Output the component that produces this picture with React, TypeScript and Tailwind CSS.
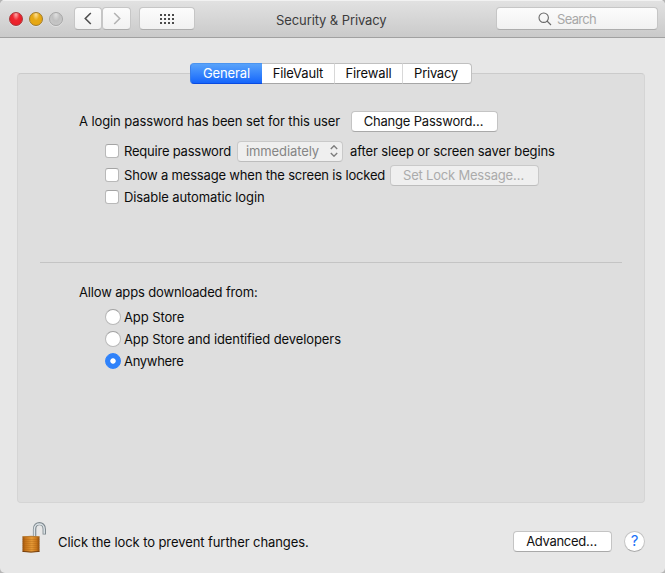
import { useState } from "react";
import type { ReactNode } from "react";
import clsx from "clsx";

const TABS = [
  { label: "General", className: "w-[72px] tracking-[-0.1px]" },
  { label: "FileVault", className: "w-[73px] tracking-[-0.15px]" },
  { label: "Firewall", className: "w-[68px] tracking-[-0.15px]" },
  { label: "Privacy", className: "w-[69px] pr-[2px] tracking-[-0.25px]" },
];

const SOURCES = [
  { name: "App Store", className: "tracking-[-0.1px]" },
  { name: "App Store and identified developers", className: "tracking-[-0.1px]" },
  { name: "Anywhere", className: "tracking-[-0.3px]" },
];

const TrafficLight = ({ className }: { className: string }) => (
  <span
    className={clsx(
      "size-[14px] rounded-full border shadow-[0_1px_0_rgba(255,255,255,0.35)]",
      className
    )}
  />
);

const ToolbarButton = ({
  className,
  label,
  children,
}: {
  className: string;
  label: string;
  children: ReactNode;
}) => (
  <button
    aria-label={label}
    className={clsx(
      "flex h-[23px] items-center justify-center rounded-[4px] border border-[#c6c6c6] border-b-[#adadad] bg-linear-to-b from-[#fcfcfc] to-[#f1f1f1]",
      className
    )}
  >
    {children}
  </button>
);

const PushButton = ({
  className,
  disabled,
  children,
}: {
  className: string;
  disabled?: boolean;
  children: ReactNode;
}) => (
  <button
    disabled={disabled}
    className={clsx(
      "flex h-[21px] items-center justify-center rounded-[4px] border whitespace-nowrap",
      disabled
        ? "border-[#c9c9c9] border-b-[#bdbdbd] bg-[#efefef] text-[#ababab]"
        : "border-[#c4c4c4] border-b-[#a9a9a9] bg-white text-[#111]",
      className
    )}
  >
    {children}
  </button>
);

const Checkbox = ({ className, children }: { className?: string; children: ReactNode }) => {
  const [checked, setChecked] = useState(false);

  return (
    <label className={clsx("flex items-center gap-[5px] whitespace-nowrap", className)}>
      <input
        type="checkbox"
        checked={checked}
        onChange={(e) => setChecked(e.target.checked)}
        className="size-[14px] appearance-none rounded-[3px] border border-[#b9b9b9] border-t-[#a4a4a4] bg-white checked:bg-[#2f82fa]"
      />
      <span>{children}</span>
    </label>
  );
};

const PadlockIcon = () => (
  <svg width="26" height="34" viewBox="0 0 26 34" className="-mt-[6px] ml-px">
    <defs>
      <linearGradient id="brass" x1="0" x2="1">
        <stop offset="0" stopColor="#8f4d10" />
        <stop offset="0.15" stopColor="#c27018" />
        <stop offset="0.55" stopColor="#e59a37" />
        <stop offset="0.82" stopColor="#c9761a" />
        <stop offset="1" stopColor="#8a4a0c" />
      </linearGradient>
    </defs>
    <path d="M12.6 16V8.2C12.6 0.8 22.3 0.8 22.3 8.2V13.5" fill="none" stroke="#7f898f" strokeWidth="3.4" />
    <path d="M12.4 16V8.2C12.4 1.4 22.2 1.4 22.2 8.2V12.8" fill="none" stroke="#dce3e7" strokeWidth="1.5" />
    <path d="M0.5 15.6Q9 14.6 17.5 15.6V30.6Q9 32 0.5 30.6Z" fill="url(#brass)" />
    <path
      d="M0.5 18.5H17.5M0.5 20.5H17.5M0.5 22.5H17.5M0.5 24.5H17.5M0.5 26.5H17.5M0.5 28.5H17.5"
      stroke="#a8600f"
      strokeOpacity="0.3"
    />
    <path d="M0.5 30.4Q9 31.8 17.5 30.4" fill="none" stroke="#75400f" />
    <path d="M0.5 15.8Q9 14.8 17.5 15.8" fill="none" stroke="#b87d35" />
  </svg>
);

const TitleBar = () => (
  <header className="flex h-[38px] items-center border-b border-[#a1a1a1] bg-linear-to-b from-[#e2e2e2] to-[#cacaca] shadow-[inset_0_1px_0_#f2f2f2]">
    <div className="ml-[9px] flex gap-[6px]">
      <TrafficLight className="border-[#a8363a] bg-[radial-gradient(ellipse_at_50%_12%,#ffa9a9_0%,#ee2630_40%,#ea1f28_75%,#fb5552_100%)]" />
      <TrafficLight className="border-[#a07a28] bg-[radial-gradient(ellipse_at_50%_12%,#ffe095_0%,#e6a916_40%,#e6a610_75%,#fccb4c_100%)]" />
      <TrafficLight className="border-[#a6a6a6] bg-[radial-gradient(ellipse_at_50%_12%,#e0e0e0_0%,#c0c0c0_45%,#cdcdcd_100%)]" />
    </div>
    <div className="ml-[11px] flex">
      <ToolbarButton label="Back" className="w-[28px]">
        <svg width="8" height="13" viewBox="0 0 8 13" fill="none" stroke="#505050" strokeWidth="1.6">
          <path d="M6.8 1L1.3 6.5L6.8 12" />
        </svg>
      </ToolbarButton>
      <ToolbarButton label="Forward" className="w-[29px]">
        <svg width="8" height="13" viewBox="0 0 8 13" fill="none" stroke="#b3b3b3" strokeWidth="1.6">
          <path d="M1.2 1L6.7 6.5L1.2 12" />
        </svg>
      </ToolbarButton>
    </div>
    <ToolbarButton label="Show All" className="ml-[8px] w-[56px]">
      <svg width="14" height="10" viewBox="0 0 14 10" fill="#4a4a4a">
        {[0, 4, 8].map((y) =>
          [0, 4, 8, 12].map((x) => <rect key={`${x}-${y}`} x={x} y={y} width="2" height="2" />)
        )}
      </svg>
    </ToolbarButton>
    <h1 className="ml-[81px] w-[220px] pt-[3px] whitespace-nowrap tracking-[-0.1px] text-[#3c3c3c]">
      Security &amp; Privacy
    </h1>
    <div className="flex h-[23px] w-[162px] items-center rounded-[4px] border border-[#c6c6c6] border-b-[#adadad] bg-linear-to-b from-[#fcfcfc] to-[#f1f1f1] pl-[41px]">
      <svg width="14" height="14" viewBox="0 0 14 14" fill="none" stroke="#696969" strokeWidth="1.1">
        <circle cx="5.7" cy="5.7" r="4.7" />
        <path d="M9 9L13 13" />
      </svg>
      <span className="ml-[5px] tracking-[-0.7px] text-[#a8a8a8]">Search</span>
    </div>
  </header>
);

const App = () => {
  const [tab, setTab] = useState("General");
  const [source, setSource] = useState("Anywhere");

  return (
    <div className="bg-[#b5b5b5]">
      <div className="flex h-[573px] w-[665px] flex-col overflow-hidden rounded-[5px] bg-[#e7e7e7] font-[Inter,sans-serif] text-[13px] leading-[16px] tracking-[-0.1px] text-[#0c0c0c]">
        <TitleBar />

        <main className="mt-[35px] ml-[17px] h-[430px] w-[628px] rounded-[4px] border border-[#d5d5d5] border-t-[#cbcbcb] bg-[#dedede]">
          <div className="-mt-[11px] ml-[172px] flex h-[21px] w-[282px]">
            {TABS.map(({ label, className }) => (
              <button
                key={label}
                onClick={() => setTab(label)}
                className={clsx(
                  "flex shrink-0 items-center justify-center border-y pb-px first:rounded-l-[4px] first:border-l last:rounded-r-[4px] last:border-r",
                  tab === label
                    ? "border-t-[#4a94f0] border-r-[#2d72f2] border-b-[#0a4be0] border-l-[#3b7fe8] bg-linear-to-b from-[#58a2fa] to-[#1565fb] text-white"
                    : "border-[#c0c0c0] border-b-[#a6a6a6] bg-white not-last:border-r not-last:border-r-[#d8d8d8]",
                  className
                )}
              >
                {label}
              </button>
            ))}
          </div>

          <section className="mt-[27px] ml-[61px]">
            <div className="flex h-[21px] items-center">
              <span className="w-[272px] pb-px whitespace-nowrap">
                A login password has been set for this user
              </span>
              <PushButton className="w-[147px] pr-[2px] pb-px tracking-[-0.2px]">Change Password…</PushButton>
            </div>
            <div className="mt-[9px] ml-[26px] flex h-[21px] items-center">
              <Checkbox className="w-[132px] pb-px tracking-[-0.22px]">Require password</Checkbox>
              <button
                disabled
                className="flex h-[21px] w-[106px] items-center justify-between rounded-[4px] border border-[#c9c9c9] border-b-[#bdbdbd] bg-[#efefef] pr-[4px] pb-px pl-[8px] text-[#858585]"
              >
                <span>immediately</span>
                <svg width="8" height="12" viewBox="0 0 8 12" fill="none" stroke="#7d7d7d" strokeWidth="1.4">
                  <path d="M0.8 4L4 0.8L7.2 4M0.8 8L4 11.2L7.2 8" />
                </svg>
              </button>
              <span className="ml-[7px] pb-px whitespace-nowrap tracking-[-0.12px]">
                after sleep or screen saver begins
              </span>
            </div>
            <div className="mt-[3px] ml-[26px] flex h-[21px] items-center">
              <Checkbox className="w-[285px] pb-px tracking-[-0.18px]">
                Show a message when the screen is locked
              </Checkbox>
              <PushButton disabled className="w-[149px] pr-[2px] pb-px tracking-[-0.2px]">
                Set Lock Message…
              </PushButton>
            </div>
            <Checkbox className="mt-[3px] ml-[26px] h-[16px]">Disable automatic login</Checkbox>
          </section>

          <hr className="mt-[57px] ml-[22px] w-[582px] border-t border-[#c4c4c4]" />

          <section className="mt-[21px] ml-[61px]">
            <h2 className="tracking-[-0.15px]">Allow apps downloaded from:</h2>
            <div className="mt-[6px] ml-[26px] flex flex-col">
              {SOURCES.map(({ name, className }) => (
                <label key={name} className={clsx("flex h-[22px] items-center gap-[3px]", className)}>
                  <input
                    type="radio"
                    name="source"
                    checked={source === name}
                    onChange={() => setSource(name)}
                    className="size-[16px] appearance-none rounded-full border border-[#b9b9b9] border-t-[#a0a0a0] bg-white checked:border-[#2f82fa] checked:bg-[radial-gradient(circle,white_2.3px,#2f82fa_3.1px)]"
                  />
                  <span>{name}</span>
                </label>
              ))}
            </div>
          </section>
        </main>

        <footer className="mt-[17px] flex h-[42px] items-center pl-[21px]">
          <PadlockIcon />
          <span className="ml-[10px] w-[455px] pt-[2px] whitespace-nowrap tracking-[-0.08px]">
            Click the lock to prevent further changes.
          </span>
          <PushButton className="w-[99px] pr-[2px] tracking-[-0.3px]">Advanced…</PushButton>
          <button
            aria-label="Help"
            className="ml-[12px] flex size-[21px] items-center justify-center rounded-full border border-[#c4c4c4] border-b-[#a9a9a9] bg-white text-[15px] text-[#1b72f8]"
          >
            ?
          </button>
        </footer>
      </div>
    </div>
  );
};

export default App;
